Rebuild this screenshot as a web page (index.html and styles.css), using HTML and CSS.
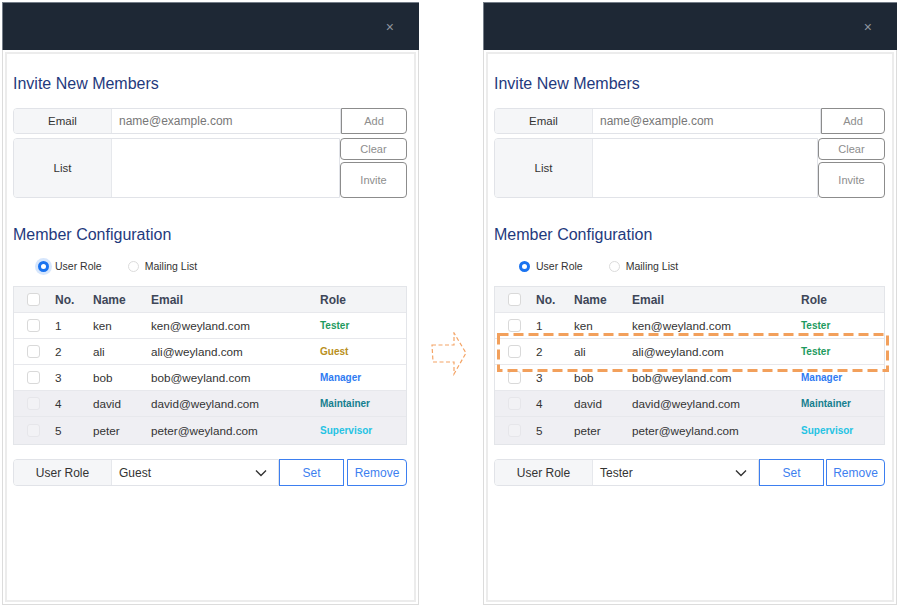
FILE: index.html
```html
<!DOCTYPE html>
<html>
<head>
<meta charset="utf-8">
<link rel="stylesheet" href="styles.css">
</head>
<body>
<div class="page">
  <section class="panel">
    <header class="panel-header"><span class="close">×</span></header>
    <div class="card">
      <h2 class="title">Invite New Members</h2>
      <div class="invite">
        <div class="field-row email-row">
          <div class="box">
            <div class="label">Email</div>
            <div class="input placeholder">name@example.com</div>
          </div>
          <button class="btn gray add">Add</button>
        </div>
        <div class="field-row list-row">
          <div class="box">
            <div class="label">List</div>
            <div class="input"></div>
          </div>
          <div class="btn-col">
            <button class="btn gray clear">Clear</button>
            <button class="btn gray invite-btn">Invite</button>
          </div>
        </div>
      </div>
      <h2 class="title title2">Member Configuration</h2>
      <div class="radios">
        <label class="radio"><span class="dot on"></span>User Role</label>
        <label class="radio"><span class="dot"></span>Mailing List</label>
      </div>
      <div class="table">
        <div class="tr th"><span class="cb"></span><span>No.</span><span>Name</span><span>Email</span><span>Role</span></div>
        <div class="tr"><span class="cb"></span><span>1</span><span>ken</span><span>ken@weyland.com</span><span class="role tester">Tester</span></div>
        <div class="tr"><span class="cb"></span><span>2</span><span>ali</span><span>ali@weyland.com</span><span class="role guest">Guest</span></div>
        <div class="tr"><span class="cb"></span><span>3</span><span>bob</span><span>bob@weyland.com</span><span class="role manager">Manager</span></div>
        <div class="tr off"><span class="cb"></span><span>4</span><span>david</span><span>david@weyland.com</span><span class="role maintainer">Maintainer</span></div>
        <div class="tr off last"><span class="cb"></span><span>5</span><span>peter</span><span>peter@weyland.com</span><span class="role supervisor">Supervisor</span></div>
      </div>
      <div class="role-row">
        <div class="box">
          <div class="label">User Role</div>
          <div class="select"><span>Guest</span><svg width="12" height="8" viewBox="0 0 12 8"><polyline points="1,1.5 6,6.5 11,1.5" fill="none" stroke="#333" stroke-width="1.4"/></svg></div>
        </div>
        <button class="btn blue set">Set</button>
        <button class="btn blue remove">Remove</button>
      </div>
    </div>
  </section>

  <div class="arrow">
    <svg width="40" height="44" viewBox="0 0 40 44">
      <path d="M2 13 L24 13 L24 1 L36 21 L24 42 L24 30 L3 30 Z" fill="none" stroke="#f4a466" stroke-width="1.2" stroke-dasharray="4 2.5"/>
    </svg>
  </div>

  <section class="panel narrow">
    <header class="panel-header"><span class="close">×</span></header>
    <div class="card">
      <h2 class="title">Invite New Members</h2>
      <div class="invite">
        <div class="field-row email-row">
          <div class="box">
            <div class="label">Email</div>
            <div class="input placeholder">name@example.com</div>
          </div>
          <button class="btn gray add">Add</button>
        </div>
        <div class="field-row list-row">
          <div class="box">
            <div class="label">List</div>
            <div class="input"></div>
          </div>
          <div class="btn-col">
            <button class="btn gray clear">Clear</button>
            <button class="btn gray invite-btn">Invite</button>
          </div>
        </div>
      </div>
      <h2 class="title title2">Member Configuration</h2>
      <div class="radios">
        <label class="radio"><span class="dot on plain"></span>User Role</label>
        <label class="radio"><span class="dot"></span>Mailing List</label>
      </div>
      <div class="table">
        <div class="tr th"><span class="cb"></span><span>No.</span><span>Name</span><span>Email</span><span>Role</span></div>
        <div class="tr"><span class="cb"></span><span>1</span><span>ken</span><span>ken@weyland.com</span><span class="role tester">Tester</span></div>
        <div class="tr"><span class="cb"></span><span>2</span><span>ali</span><span>ali@weyland.com</span><span class="role tester">Tester</span></div>
        <div class="tr"><span class="cb"></span><span>3</span><span>bob</span><span>bob@weyland.com</span><span class="role manager">Manager</span></div>
        <div class="tr off"><span class="cb"></span><span>4</span><span>david</span><span>david@weyland.com</span><span class="role maintainer">Maintainer</span></div>
        <div class="tr off last"><span class="cb"></span><span>5</span><span>peter</span><span>peter@weyland.com</span><span class="role supervisor">Supervisor</span></div>
      </div>
      <div class="role-row">
        <div class="box">
          <div class="label">User Role</div>
          <div class="select"><span>Tester</span><svg width="12" height="8" viewBox="0 0 12 8"><polyline points="1,1.5 6,6.5 11,1.5" fill="none" stroke="#333" stroke-width="1.4"/></svg></div>
        </div>
        <button class="btn blue set">Set</button>
        <button class="btn blue remove">Remove</button>
      </div>
    </div>
    <svg class="highlight" width="392" height="39" viewBox="0 0 392 39">
      <rect x="1.5" y="1.5" width="389" height="36" fill="none" stroke="#f2a05c" stroke-width="3" stroke-dasharray="10 5"/>
    </svg>
  </section>
</div>
</body>
</html>
```

FILE: styles.css
```css
* { box-sizing: border-box; }
html, body { margin: 0; padding: 0; background: #fff; }
body {
  font-family: "Liberation Sans", Arial, sans-serif;
  color: #333;
  font-size: 12px;
}
.page {
  display: flex;
  align-items: flex-start;
  padding: 2px 0 0 2px;
}
.panel {
  position: relative;
  width: 417px;
  height: 603px;
  border: 1px solid #dcdcdc;
  display: flex;
  flex-direction: column;
  background: #fff;
}
.panel.narrow { width: 414px; }
.panel-header {
  height: 48px;
  margin: -1px -1px 0 -1px;
  background: #1e2835;
  border-top: 1px solid #747d88;
  border-left: 1px solid #747d88;
  display: flex;
  align-items: center;
  justify-content: flex-end;
  padding-right: 25px;
  flex-shrink: 0;
}
.close {
  color: #8f969f;
  font-size: 14px;
  line-height: 1;
}
.card {
  flex: 1;
  margin: 2px 2px 2px 2px;
  border: 2px solid #ececec;
  padding: 20px 7px 0 6px;
}
.title {
  margin: 0;
  font-size: 16px;
  line-height: 20px;
  font-weight: normal;
  color: #1f3a7d;
}
.title2 { margin-top: 27px; }
.invite {
  margin-top: 14px;
  display: flex;
  flex-direction: column;
  gap: 4px;
}
.field-row { display: flex; }
.box {
  display: flex;
  flex: 1;
  border: 1px solid #e1e3e8;
  border-radius: 4px 0 0 4px;
  overflow: hidden;
}
.email-row { height: 26px; }
.list-row { height: 60px; }
.label {
  width: 98px;
  flex-shrink: 0;
  background: #f5f6f8;
  border-right: 1px solid #e6e8ec;
  display: flex;
  align-items: center;
  justify-content: center;
  color: #333;
  font-size: 11.5px;
}
.input {
  flex: 1;
  display: flex;
  align-items: center;
  padding-left: 7px;
  background: #fff;
}
.placeholder { color: #777; font-size: 12px; }
.btn {
  font-family: inherit;
  background: #fff;
  margin: 0;
  padding: 0;
  cursor: pointer;
}
.btn.gray {
  border: 1px solid #8c8c8c;
  color: #8d8d8d;
  font-size: 11px;
}
.add { width: 66px; border-radius: 0 4px 4px 0; }
.btn-col {
  width: 67px;
  display: flex;
  flex-direction: column;
  gap: 2px;
}
.clear { height: 22px; border-radius: 4px; }
.invite-btn { flex: 1; border-radius: 4px; }
.radios {
  margin-top: 13px;
  height: 16px;
  display: flex;
  align-items: center;
  padding-left: 25px;
  gap: 26px;
}
.radio {
  display: flex;
  align-items: center;
  gap: 6px;
  font-size: 10.5px;
  color: #333;
}
.dot {
  width: 11px;
  height: 11px;
  border-radius: 50%;
  border: 1px solid #dcdcdc;
  background: #fff;
}
.dot.on {
  border: 3px solid #1a73f0;
  background: #fff;
  box-shadow: 0 0 0 3px rgba(26, 115, 240, 0.18);
}
.dot.on.plain { box-shadow: none; }
.table {
  margin-top: 12px;
  border: 1px solid #e3e5e9;
}
.tr {
  display: grid;
  grid-template-columns: 41px 38px 58px 169px 1fr;
  align-items: center;
  height: 26px;
  border-bottom: 1px solid #e7e8ec;
  font-size: 11.7px;
  color: #333;
}
.tr.last { border-bottom: none; height: 27px; }
.tr.th {
  height: 26px;
  background: #f3f4f6;
  font-weight: bold;
  font-size: 12px;
  color: #3e4658;
}
.tr.off { background: #efeff3; }
.cb {
  width: 13px;
  height: 13px;
  margin-left: 13px;
  border: 1px solid #d9d9d9;
  border-radius: 3px;
  background: #fff;
}
.tr.off .cb { background: #f2f2f5; border-color: #e6e6ea; }
.role { font-weight: bold; font-size: 10px; }
.tester { color: #1e9a5e; }
.guest { color: #b98f21; }
.manager { color: #2f7bf2; }
.maintainer { color: #15808f; }
.supervisor { color: #25c3e3; }
.role-row {
  margin-top: 14px;
  height: 27px;
  display: flex;
}
.role-row .box { border-radius: 4px 0 0 4px; }
.role-row .label { font-size: 12px; }
.select {
  flex: 1;
  display: flex;
  align-items: center;
  justify-content: space-between;
  padding: 0 11px 0 7px;
  font-size: 12px;
  color: #333;
}
.btn.blue {
  border: 1px solid #3d7ff0;
  color: #3d7ff0;
  font-size: 12px;
}
.set { width: 65px; }
.remove { width: 60px; margin-left: 3px; border-radius: 0 4px 4px 0; }
.narrow .remove { width: 59px; margin-left: 2px; }
.narrow .set { width: 65px; }
.narrow .add { width: 64px; }
.arrow {
  width: 64px;
  flex-shrink: 0;
  display: flex;
  justify-content: center;
  padding-top: 330px;
  padding-right: 2px;
}
.highlight {
  position: absolute;
  left: 13px;
  top: 330px;
}
```
